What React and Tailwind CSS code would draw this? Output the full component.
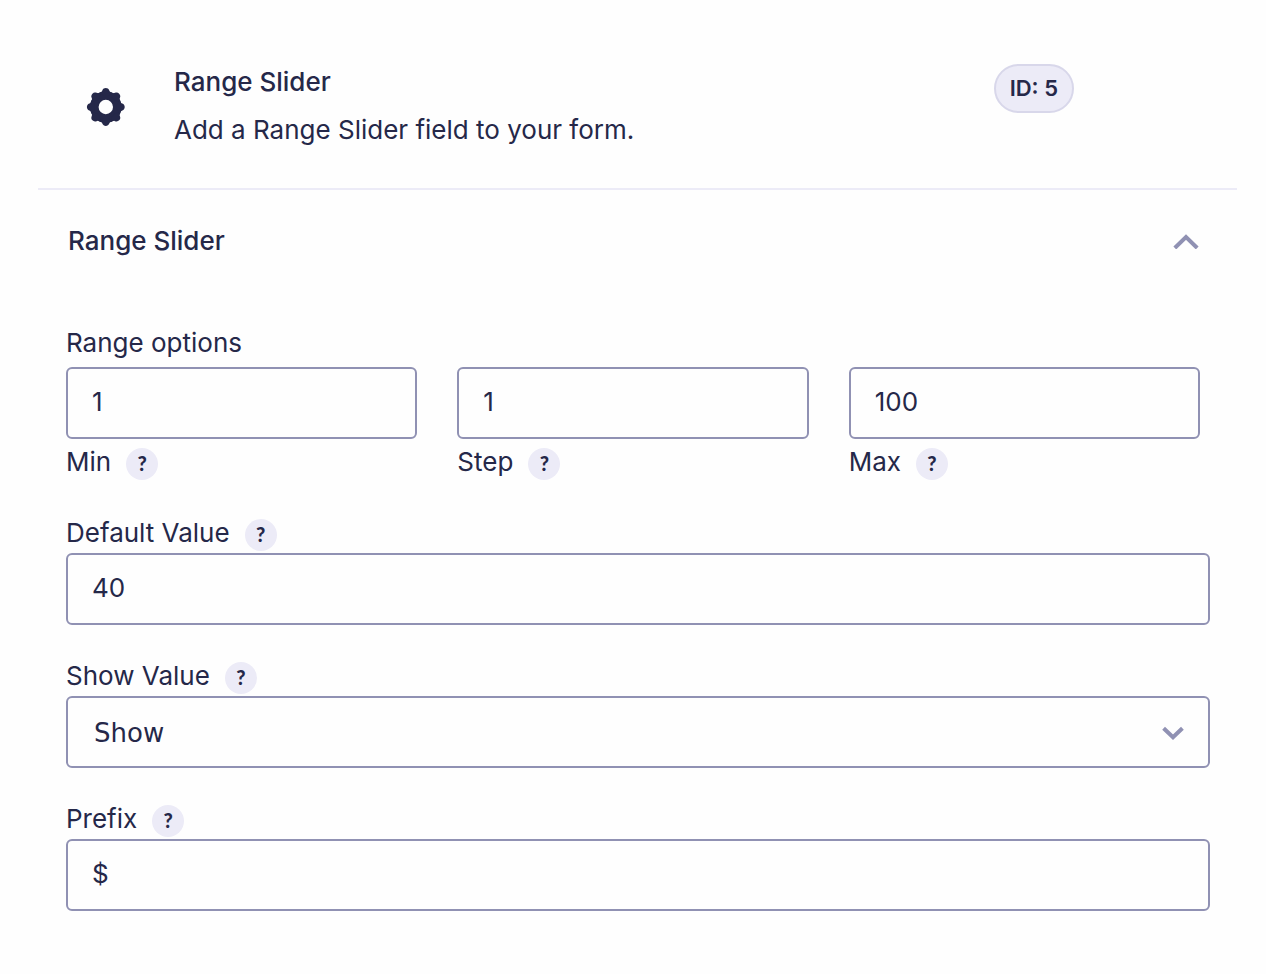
import { useState } from "react";

const lobes = [0, 45, 90, 135, 180, 225, 270, 315];

function GearIcon() {
  return (
    <svg viewBox="0 0 40 40" className="size-10 shrink-0" fill="#252849" aria-hidden="true">
      <circle cx="19.8" cy="20" r="11.5" fill="none" stroke="#252849" strokeWidth="8.6" />
      {lobes.map((angle) => (
        <path
          key={angle}
          transform={`rotate(${angle} 19.8 20)`}
          d="M13.2 6C15 5.6 15.8 4.8 16.3 3.5C17 1.8 18.2 1.1 19.8 1.1C21.4 1.1 22.6 1.8 23.3 3.5C23.8 4.8 24.6 5.6 26.4 6L22 9H17.6Z"
        />
      ))}
    </svg>
  );
}

function Help({ topic }) {
  return (
    <button
      type="button"
      aria-label={`Help: ${topic}`}
      className="mt-1 flex size-8 shrink-0 items-center justify-center rounded-full bg-[#ecebf7] pb-0.5 font-[Lato,sans-serif] text-xl font-black leading-none"
    >
      ?
    </button>
  );
}

function FieldLabel({ id, children }) {
  return (
    <div className="flex h-[38px] items-center gap-[15px] pb-0.5">
      <label htmlFor={id}>{children}</label>
      <Help topic={children} />
    </div>
  );
}

const control =
  "block h-18 w-full appearance-none rounded-md border-2 border-[#9091b3] bg-transparent px-6 outline-none focus:border-[#5d5fef]";

function RangeField({ id, label, value }) {
  return (
    <div className="min-w-0 flex-1">
      <input id={id} type="text" inputMode="numeric" defaultValue={value} className={`${control} pb-1`} />
      <div className="mt-[5px]">
        <FieldLabel id={id}>{label}</FieldLabel>
      </div>
    </div>
  );
}

export default function App() {
  const [open, setOpen] = useState(true);
  return (
    <main className="min-h-screen bg-[#fefefe] pr-[29px] pb-14 pl-[38px] font-[Inter,sans-serif] text-[26px] leading-8 text-[#252849]">
      <header className="flex items-start border-b-2 border-[#ecebf7] pt-16 pb-[42px] pl-12">
        <div className="mt-[23px] mr-12">
          <GearIcon />
        </div>
        <div className="flex-1">
          <h1 className="mt-0.5 font-medium">Range Slider</h1>
          <p className="mt-4">Add a Range Slider field to your form.</p>
        </div>
        <span className="mr-[163px] flex h-[49px] items-center rounded-full border-2 border-[#d8d7ea] bg-[#ecebf7] px-3.5 pb-0.5 text-[22px] font-semibold">
          ID: 5
        </span>
      </header>

      <section className="pr-[27px] pl-7">
        <h2 className="pt-[35px]">
          <button
            type="button"
            aria-expanded={open}
            onClick={() => setOpen(!open)}
            className="flex w-full items-center justify-between pr-[11px] pl-0.5 text-left font-medium"
          >
            Range Slider
            <svg viewBox="0 0 26 16" className={open ? "h-4 w-[26px]" : "h-4 w-[26px] rotate-180"} fill="none" stroke="#9091b3" strokeWidth="4" aria-hidden="true">
              <path d="M1.8 15L13 4L24.2 15" />
            </svg>
          </button>
        </h2>

        {open && (
          <form className="pt-[70px]">
            <fieldset className="pr-2.5">
              <legend className="pb-2">Range options</legend>
              <div className="flex gap-10">
                <RangeField id="min" label="Min" value="1" />
                <RangeField id="step" label="Step" value="1" />
                <RangeField id="max" label="Max" value="100" />
              </div>
            </fieldset>

            <div className="mt-[33px] flex flex-col gap-[33px]">
              <div>
                <FieldLabel id="default-value">Default Value</FieldLabel>
                <input id="default-value" type="text" inputMode="numeric" defaultValue="40" className={`${control} pb-1`} />
              </div>
              <div>
                <FieldLabel id="show-value">Show Value</FieldLabel>
                <div className="relative">
                  <select id="show-value" defaultValue="Show" className={`${control} pt-0.5 pl-[26px] font-['DejaVu_Sans',sans-serif]`}>
                    <option>Show</option>
                    <option>Hide</option>
                  </select>
                  <svg viewBox="0 0 22 16" className="pointer-events-none absolute top-1/2 right-[26px] h-4 w-[22px] -translate-y-1/2" fill="none" stroke="#9091b3" strokeWidth="4" aria-hidden="true">
                    <path d="M1.6 4.2L11 13.2L20.4 4.2" />
                  </svg>
                </div>
              </div>
              <div>
                <FieldLabel id="prefix">Prefix</FieldLabel>
                <input id="prefix" type="text" defaultValue="$" className={`${control} pb-1`} />
              </div>
            </div>
          </form>
        )}
      </section>
    </main>
  );
}
